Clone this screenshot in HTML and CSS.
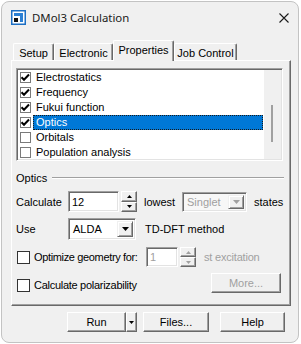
FILE: index.html
```html
<!DOCTYPE html>
<html>
<head>
<meta charset="utf-8">
<link rel="stylesheet" href="styles.css">
</head>
<body>
<div class="window">
  <div class="titlebar">
    <svg class="appicon" width="15" height="15" viewBox="0 0 15 15">
      <rect x="0" y="0" width="15" height="15" fill="#1c6fc4"/>
      <rect x="1.5" y="1.5" width="12" height="12" fill="#ffffff"/>
      <rect x="3" y="3" width="9" height="9" fill="#2a7fd4"/>
      <rect x="3" y="6" width="6" height="6" fill="#ffffff"/>
      <rect x="3" y="8" width="4" height="4" fill="#111111"/>
    </svg>
    <span class="title">DMol3 Calculation</span>
    <svg class="close" width="10" height="10" viewBox="0 0 10 10">
      <path d="M0.5 0.5L9.5 9.5M9.5 0.5L0.5 9.5" stroke="#1a1a1a" stroke-width="1.1" fill="none"/>
    </svg>
  </div>
  <div class="body">
    <div class="tabs">
      <div class="tab w-setup">Setup</div>
      <div class="tab w-elec">Electronic</div>
      <div class="tab sel w-prop">Properties</div>
      <div class="tab w-job">Job Control</div>
    </div>
    <div class="panel">
      <div class="listbox">
        <div class="items">
          <div class="item"><span class="lcb"><svg width="11" height="11" viewBox="0 0 11 11"><path d="M1.5 5.2L4 7.7L9 2.5" stroke="#000" stroke-width="2" fill="none"/></svg></span><span class="lbl">Electrostatics</span></div>
          <div class="item"><span class="lcb"><svg width="11" height="11" viewBox="0 0 11 11"><path d="M1.5 5.2L4 7.7L9 2.5" stroke="#000" stroke-width="2" fill="none"/></svg></span><span class="lbl">Frequency</span></div>
          <div class="item"><span class="lcb"><svg width="11" height="11" viewBox="0 0 11 11"><path d="M1.5 5.2L4 7.7L9 2.5" stroke="#000" stroke-width="2" fill="none"/></svg></span><span class="lbl">Fukui function</span></div>
          <div class="item"><span class="lcb"><svg width="11" height="11" viewBox="0 0 11 11"><path d="M1.5 5.2L4 7.7L9 2.5" stroke="#000" stroke-width="2" fill="none"/></svg></span><span class="lbl selected">Optics</span></div>
          <div class="item"><span class="lcb"></span><span class="lbl">Orbitals</span></div>
          <div class="item"><span class="lcb"></span><span class="lbl">Population analysis</span></div>
        </div>
        <div class="vscroll"><div class="thumb"></div></div>
      </div>
      <div class="group">
        <div class="ghead"><span>Optics</span><div class="gline"></div></div>
        <div class="row r1">
          <span class="cap c-calc">Calculate</span>
          <div class="edit w-12"><span>12</span></div>
          <div class="spin">
            <div class="sbtn"><svg width="5" height="3" viewBox="0 0 5 3"><path d="M0 3L2.5 0L5 3z" fill="#000"/></svg></div>
            <div class="sbtn"><svg width="5" height="3" viewBox="0 0 5 3"><path d="M0 0L2.5 3L5 0z" fill="#000"/></svg></div>
          </div>
          <span class="cap c-lowest">lowest</span>
          <div class="combo disabled w-singlet">
            <span class="cval">Singlet</span>
            <div class="cbtn"><svg width="7" height="4" viewBox="0 0 7 4"><path d="M0 0H7L3.5 4z" fill="#a0a0a0"/></svg></div>
          </div>
          <span class="cap c-states">states</span>
        </div>
        <div class="row r2">
          <span class="cap c-calc">Use</span>
          <div class="combo w-alda">
            <span class="cval">ALDA</span>
            <div class="cbtn"><svg width="7" height="4" viewBox="0 0 7 4"><path d="M0 0H7L3.5 4z" fill="#000"/></svg></div>
          </div>
          <span class="cap c-method">TD-DFT method</span>
        </div>
        <div class="row r3">
          <span class="cb"></span>
          <span class="cap c-opt">Optimize geometry for:</span>
          <div class="edit disabled w-1"><span>1</span></div>
          <div class="spin">
            <div class="sbtn"><svg width="5" height="3" viewBox="0 0 5 3"><path d="M0 3L2.5 0L5 3z" fill="#a0a0a0"/></svg></div>
            <div class="sbtn"><svg width="5" height="3" viewBox="0 0 5 3"><path d="M0 0L2.5 3L5 0z" fill="#a0a0a0"/></svg></div>
          </div>
          <span class="cap c-st gray">st excitation</span>
        </div>
        <div class="row r4">
          <span class="cb"></span>
          <span class="cap c-pol">Calculate polarizability</span>
          <div class="btn more gray">More...</div>
        </div>
      </div>
    </div>
    <div class="buttons">
      <div class="btn b-run">Run</div>
      <div class="btn b-drop"><svg width="5" height="3" viewBox="0 0 5 3"><path d="M0 0H5L2.5 3z" fill="#000"/></svg></div>
      <div class="btn b-files">Files...</div>
      <div class="btn b-help">Help</div>
    </div>
  </div>
</div>
</body>
</html>
```

FILE: styles.css
```css
* { box-sizing: border-box; }
html, body { margin: 0; padding: 0; }
body { width: 301px; height: 344px; background: #ffffff; overflow: hidden; }

.window {
  margin: 1px;
  width: 298px;
  height: 342px;
  border: 1px solid #c3c3c3;
  border-radius: 8px;
  background: #f0f0f0;
  display: flex;
  flex-direction: column;
  font: 11px "Liberation Sans", Arial, sans-serif;
  color: #000;
  overflow: hidden;
}

.titlebar {
  height: 30px;
  display: flex;
  align-items: center;
  padding-left: 9px;
}
.appicon { display: block; margin-top: 1px; }
.title {
  margin-left: 6px;
  font: 11.4px "Noto Sans", "Open Sans", sans-serif;
  color: #1a1a1a;
  margin-top: 1px;
}
.close { margin-left: auto; margin-right: 9px; margin-top: 1px; }

.body { padding: 0 7px 0 9px; display: flex; flex-direction: column; }

.tabs {
  margin-top: 8px;
  height: 20px;
  display: flex;
  align-items: flex-end;
  padding-left: 2px;
}
.tab {
  height: 17px;
  border-top: 1px solid #ffffff;
  border-left: 1px solid #ffffff;
  border-right: 1px solid #696969;
  box-shadow: inset -1px 0 #a0a0a0;
  border-radius: 2px 2px 0 0;
  display: flex;
  align-items: center;
  justify-content: center;
  padding-top: 1px;
  white-space: nowrap;
}
.tab.sel {
  height: 21px;
  margin-bottom: -1px;
  position: relative;
  z-index: 2;
  background: #f0f0f0;
  padding-top: 0;
  padding-bottom: 3px;
}
.w-setup { width: 41px; }
.w-elec { width: 59px; }
.w-prop { width: 61px; }
.w-job { width: 63px; }

.panel {
  height: 246px;
  border-top: 1px solid #ffffff;
  border-left: 1px solid #ffffff;
  border-right: 1px solid #696969;
  border-bottom: 1px solid #696969;
  box-shadow: inset -1px -1px #a0a0a0;
  display: flex;
  flex-direction: column;
}

.listbox {
  margin: 7px 0 0 4px;
  width: 267px;
  height: 93px;
  border: 1px solid;
  border-color: #a0a0a0 #ffffff #ffffff #a0a0a0;
  box-shadow: inset 1px 1px #696969, inset -1px -1px #e3e3e3;
  padding: 1px;
  display: flex;
  background: #ffffff;
}
.items { flex: 1; display: flex; flex-direction: column; }
.item { height: 15px; display: flex; align-items: center; padding-left: 2px; }
.lcb {
  width: 11px; height: 11px;
  border: 1px solid #7a7a7a;
  background: #fff;
  display: flex; align-items: center; justify-content: center;
  margin-right: 2px;
}
.lcb svg { display: block; flex: none; }
.lbl {
  flex: 1;
  height: 15px;
  line-height: 13px;
  padding-left: 2px;
  margin-right: 1px;
  border: 1px solid transparent;
}
.lbl.selected {
  background: #0078d7;
  color: #ffffff;
  border: 1px dotted #1a1a1a;
}
.vscroll {
  width: 17px;
  background: #f0f0f0;
  padding: 35px 0 0 7px;
}
.thumb { width: 2px; height: 37px; background: #a0a0a0; }

.group { margin: 0 6px 0 4px; display: flex; flex-direction: column; }
.ghead { margin-top: 10px; height: 13px; display: flex; align-items: center; }
.gline {
  flex: 1;
  margin-left: 5px;
  margin-top: 1px;
  border-top: 1px solid #a0a0a0;
  border-bottom: 1px solid #ffffff;
}

.row { display: flex; align-items: center; }
.r1 { margin-top: 7px; height: 21px; }
.r2 { margin-top: 6px; height: 22px; }
.r3 { margin-top: 7px; height: 20px; }
.r4 { margin-top: 6px; height: 20px; }

.cap { white-space: nowrap; }
.c-calc { width: 52px; }
.c-lowest { width: 38px; margin-left: 7px; }
.c-states { margin-left: 7px; }
.c-method { margin-left: 9px; }
.c-opt { width: 112px; margin-left: 4px; letter-spacing: -0.35px; }
.c-st { margin-left: 8px; letter-spacing: -0.2px; }
.c-pol { margin-left: 4px; letter-spacing: -0.28px; }
.gray { color: #a0a0a0; }

.edit {
  height: 21px;
  border: 1px solid;
  border-color: #a0a0a0 #ffffff #ffffff #a0a0a0;
  box-shadow: inset 1px 1px #696969, inset -1px -1px #e3e3e3;
  background: #ffffff;
  display: flex;
  align-items: center;
  padding-left: 3px;
}
.edit.disabled { color: #a0a0a0; height: 20px; }
.w-12 { width: 51px; }
.w-1 { width: 32px; }

.spin {
  width: 16px;
  height: 21px;
  margin-left: 2px;
  display: flex;
  flex-direction: column;
}
.r3 .spin { height: 20px; }
.sbtn {
  flex: 1;
  border: 1px solid;
  border-color: #ffffff #696969 #696969 #ffffff;
  box-shadow: inset -1px -1px #a0a0a0;
  background: #f0f0f0;
  display: flex;
  align-items: center;
  justify-content: center;
}
.sbtn svg { display: block; }

.combo {
  height: 21px;
  border: 1px solid;
  border-color: #a0a0a0 #ffffff #ffffff #a0a0a0;
  box-shadow: inset 1px 1px #696969, inset -1px -1px #e3e3e3;
  background: #ffffff;
  display: flex;
  align-items: stretch;
  padding: 2px;
}
.combo.disabled { background: #f7f7f7; color: #a0a0a0; height: 20px; }
.w-singlet { width: 65px; }
.w-alda { width: 68px; height: 22px; }
.cval { flex: 1; display: flex; align-items: center; padding-left: 2px; }
.cbtn {
  width: 16px;
  border: 1px solid;
  border-color: #f0f0f0 #696969 #696969 #f0f0f0;
  box-shadow: inset 1px 1px #ffffff, inset -1px -1px #a0a0a0;
  background: #f0f0f0;
  display: flex;
  align-items: center;
  justify-content: center;
}
.cbtn svg { display: block; }

.cb {
  width: 13px; height: 13px;
  border: 1px solid #333333;
  background: #ffffff;
  margin-left: 1px;
}
.r4 .cb { margin-top: 4px; }
.r4 .c-pol { margin-top: 4px; }

.btn {
  height: 20px;
  border: 1px solid;
  border-color: #ffffff #696969 #696969 #ffffff;
  box-shadow: inset -1px -1px #a0a0a0;
  background: #f0f0f0;
  display: flex;
  align-items: center;
  justify-content: center;
}
.more { width: 70px; margin-left: auto; margin-right: 3px; }

.buttons {
  margin-top: 6px;
  height: 20px;
  display: flex;
  padding-left: 56px;
}
.b-run { width: 59px; }
.b-drop { width: 11px; margin-left: 0; }
.b-drop svg { display: block; }
.b-files { width: 66px; margin-left: 6px; }
.b-help { width: 65px; margin-left: 11px; }
```
